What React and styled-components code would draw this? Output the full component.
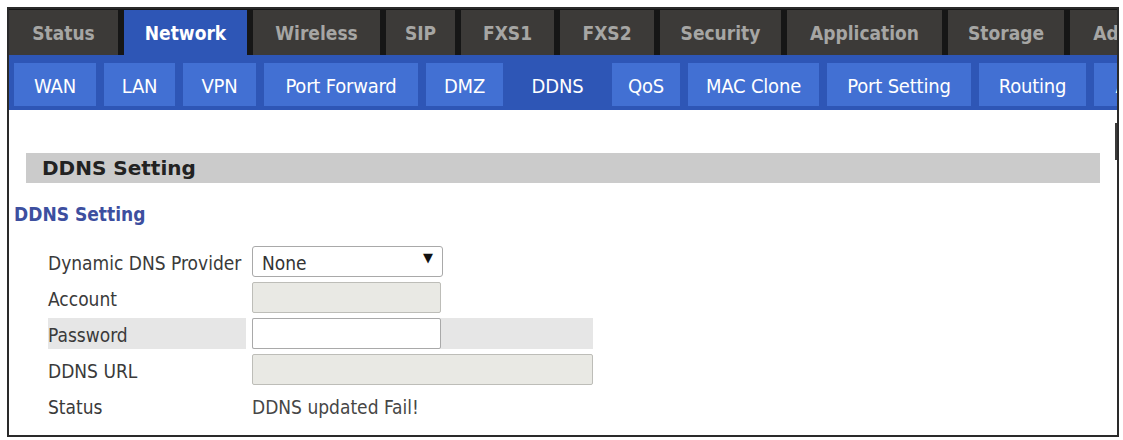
import React from "react";
import styled, { createGlobalStyle } from "styled-components";

const GlobalStyle = createGlobalStyle`
  html, body { margin: 0; padding: 0; background: #ffffff; }
  body { font-family: "DejaVu Sans Condensed", "DejaVu Sans", sans-serif; }
  * { box-sizing: border-box; }
`;

const Frame = styled.div`
  position: relative;
  margin: 7px 0 0 7px;
  width: 1112px;
  height: 430px;
  border: 2px solid #2a2a2a;
  background: #ffffff;
  overflow: hidden;
`;

const ScrollNub = styled.div`
  position: absolute;
  right: -2px;
  top: 114px;
  width: 4px;
  height: 37px;
  background: #3a3a3a;
`;

const TopBar = styled.nav`
  display: flex;
  gap: 6px;
  height: 46px;
  padding-top: 1px;
  background: #161616;
  overflow: hidden;
  white-space: nowrap;
`;

const Tab = styled.div`
  flex: 0 0 ${(p) => p.$w}px;
  display: flex;
  align-items: center;
  justify-content: center;
  font-family: "DejaVu Sans Condensed", "DejaVu Sans", sans-serif;
  font-weight: bold;
  font-size: 19px;
  color: ${(p) => (p.$active ? "#ffffff" : "#a6a6a4")};
  background: ${(p) => (p.$active ? "#2e56b6" : "#3c3a38")};
`;

const SubBar = styled.nav`
  display: flex;
  gap: 8px;
  height: 55px;
  padding: 8px 0 4px 5px;
  background: #2e56b6;
  overflow: hidden;
  white-space: nowrap;
`;

const SubButton = styled.div`
  flex: 0 0 ${(p) => p.$w}px;
  display: flex;
  align-items: center;
  justify-content: center;
  padding-top: 3px;
  font-family: "DejaVu Sans Condensed", "DejaVu Sans", sans-serif;
  font-size: 20px;
  letter-spacing: -0.2px;
  color: #ffffff;
  background: ${(p) => (p.$active ? "transparent" : "#4270d3")};
`;

const SectionBar = styled.div`
  margin: 43px 17px 0;
  height: 30px;
  padding-left: 16px;
  background: #cbcbcb;
  font-family: "DejaVu Sans", sans-serif;
  font-weight: bold;
  font-size: 20px;
  line-height: 30px;
  color: #222222;
`;

const SubHeading = styled.div`
  margin: 20px 0 0 5px;
  font-family: "DejaVu Sans Condensed", "DejaVu Sans", sans-serif;
  font-weight: bold;
  font-size: 19px;
  line-height: 22px;
  color: #3d4f9f;
`;

const Form = styled.div`
  display: flex;
  flex-direction: column;
  gap: 5px;
  margin: 21px 0 0 39px;
`;

const Row = styled.div`
  display: grid;
  grid-template-columns: 198px 341px;
  column-gap: 6px;
  height: 31px;
`;

const Label = styled.div`
  display: flex;
  align-items: center;
  padding-top: 2px;
  font-size: 19px;
  color: #3a3a3a;
  background: ${(p) => (p.$hl ? "#e6e6e6" : "transparent")};
`;

const Cell = styled.div`
  display: flex;
  align-items: center;
  background: ${(p) => (p.$hl ? "#e6e6e6" : "transparent")};
`;

const TextInput = styled.input`
  width: ${(p) => p.$w}px;
  height: 31px;
  margin: 0;
  padding: 0 6px;
  border: 1px solid ${(p) => (p.disabled ? "#bdbdb8" : "#a9a9a9")};
  border-radius: 2px;
  background: ${(p) => (p.disabled ? "#e9e9e4" : "#ffffff")};
  font-family: inherit;
  font-size: 18px;
`;

const SelectWrap = styled.div`
  position: relative;
  width: 191px;
  height: 31px;
`;

const Select = styled.select`
  appearance: none;
  -webkit-appearance: none;
  width: 100%;
  height: 100%;
  margin: 0;
  padding: 2px 0 0 9px;
  border: 1px solid #a9a9a9;
  border-radius: 3px;
  background: #ffffff;
  color: #333333;
  font-family: "DejaVu Sans Condensed", "DejaVu Sans", sans-serif;
  font-size: 19px;
`;

const Arrow = styled.span`
  position: absolute;
  right: 10px;
  top: 4px;
  font-family: "DejaVu Sans", sans-serif;
  font-size: 13px;
  color: #111111;
  pointer-events: none;
`;

const Value = styled.div`
  display: flex;
  align-items: center;
  padding-top: 2px;
  font-size: 19px;
  color: #464646;
`;

const tabs = [
  { label: "Status", w: 109 },
  { label: "Network", w: 123, active: true },
  { label: "Wireless", w: 127 },
  { label: "SIP", w: 69 },
  { label: "FXS1", w: 93 },
  { label: "FXS2", w: 94 },
  { label: "Security", w: 121 },
  { label: "Application", w: 155 },
  { label: "Storage", w: 116 },
  { label: "Administration", w: 190 },
];

const subs = [
  { label: "WAN", w: 82 },
  { label: "LAN", w: 71 },
  { label: "VPN", w: 73 },
  { label: "Port Forward", w: 154 },
  { label: "DMZ", w: 77 },
  { label: "DDNS", w: 93, active: true },
  { label: "QoS", w: 68 },
  { label: "MAC Clone", w: 131 },
  { label: "Port Setting", w: 144 },
  { label: "Routing", w: 107 },
  { label: "Advanced", w: 130 },
];

export default function App() {
  return (
    <>
      <GlobalStyle />
      <Frame>
        <ScrollNub />
        <TopBar>
          {tabs.map((t) => (
            <Tab key={t.label} $w={t.w} $active={t.active}>
              {t.label}
            </Tab>
          ))}
        </TopBar>
        <SubBar>
          {subs.map((s) => (
            <SubButton key={s.label} $w={s.w} $active={s.active}>
              {s.label}
            </SubButton>
          ))}
        </SubBar>
        <SectionBar>DDNS Setting</SectionBar>
        <SubHeading>DDNS Setting</SubHeading>
        <Form>
          <Row>
            <Label>Dynamic DNS Provider</Label>
            <Cell>
              <SelectWrap>
                <Select defaultValue="none">
                  <option value="none">None</option>
                </Select>
                <Arrow>▼</Arrow>
              </SelectWrap>
            </Cell>
          </Row>
          <Row>
            <Label>Account</Label>
            <Cell>
              <TextInput $w={189} disabled />
            </Cell>
          </Row>
          <Row>
            <Label $hl>Password</Label>
            <Cell $hl>
              <TextInput $w={189} type="password" />
            </Cell>
          </Row>
          <Row>
            <Label>DDNS URL</Label>
            <Cell>
              <TextInput $w={341} disabled />
            </Cell>
          </Row>
          <Row>
            <Label>Status</Label>
            <Value>DDNS updated Fail!</Value>
          </Row>
        </Form>
      </Frame>
    </>
  );
}
